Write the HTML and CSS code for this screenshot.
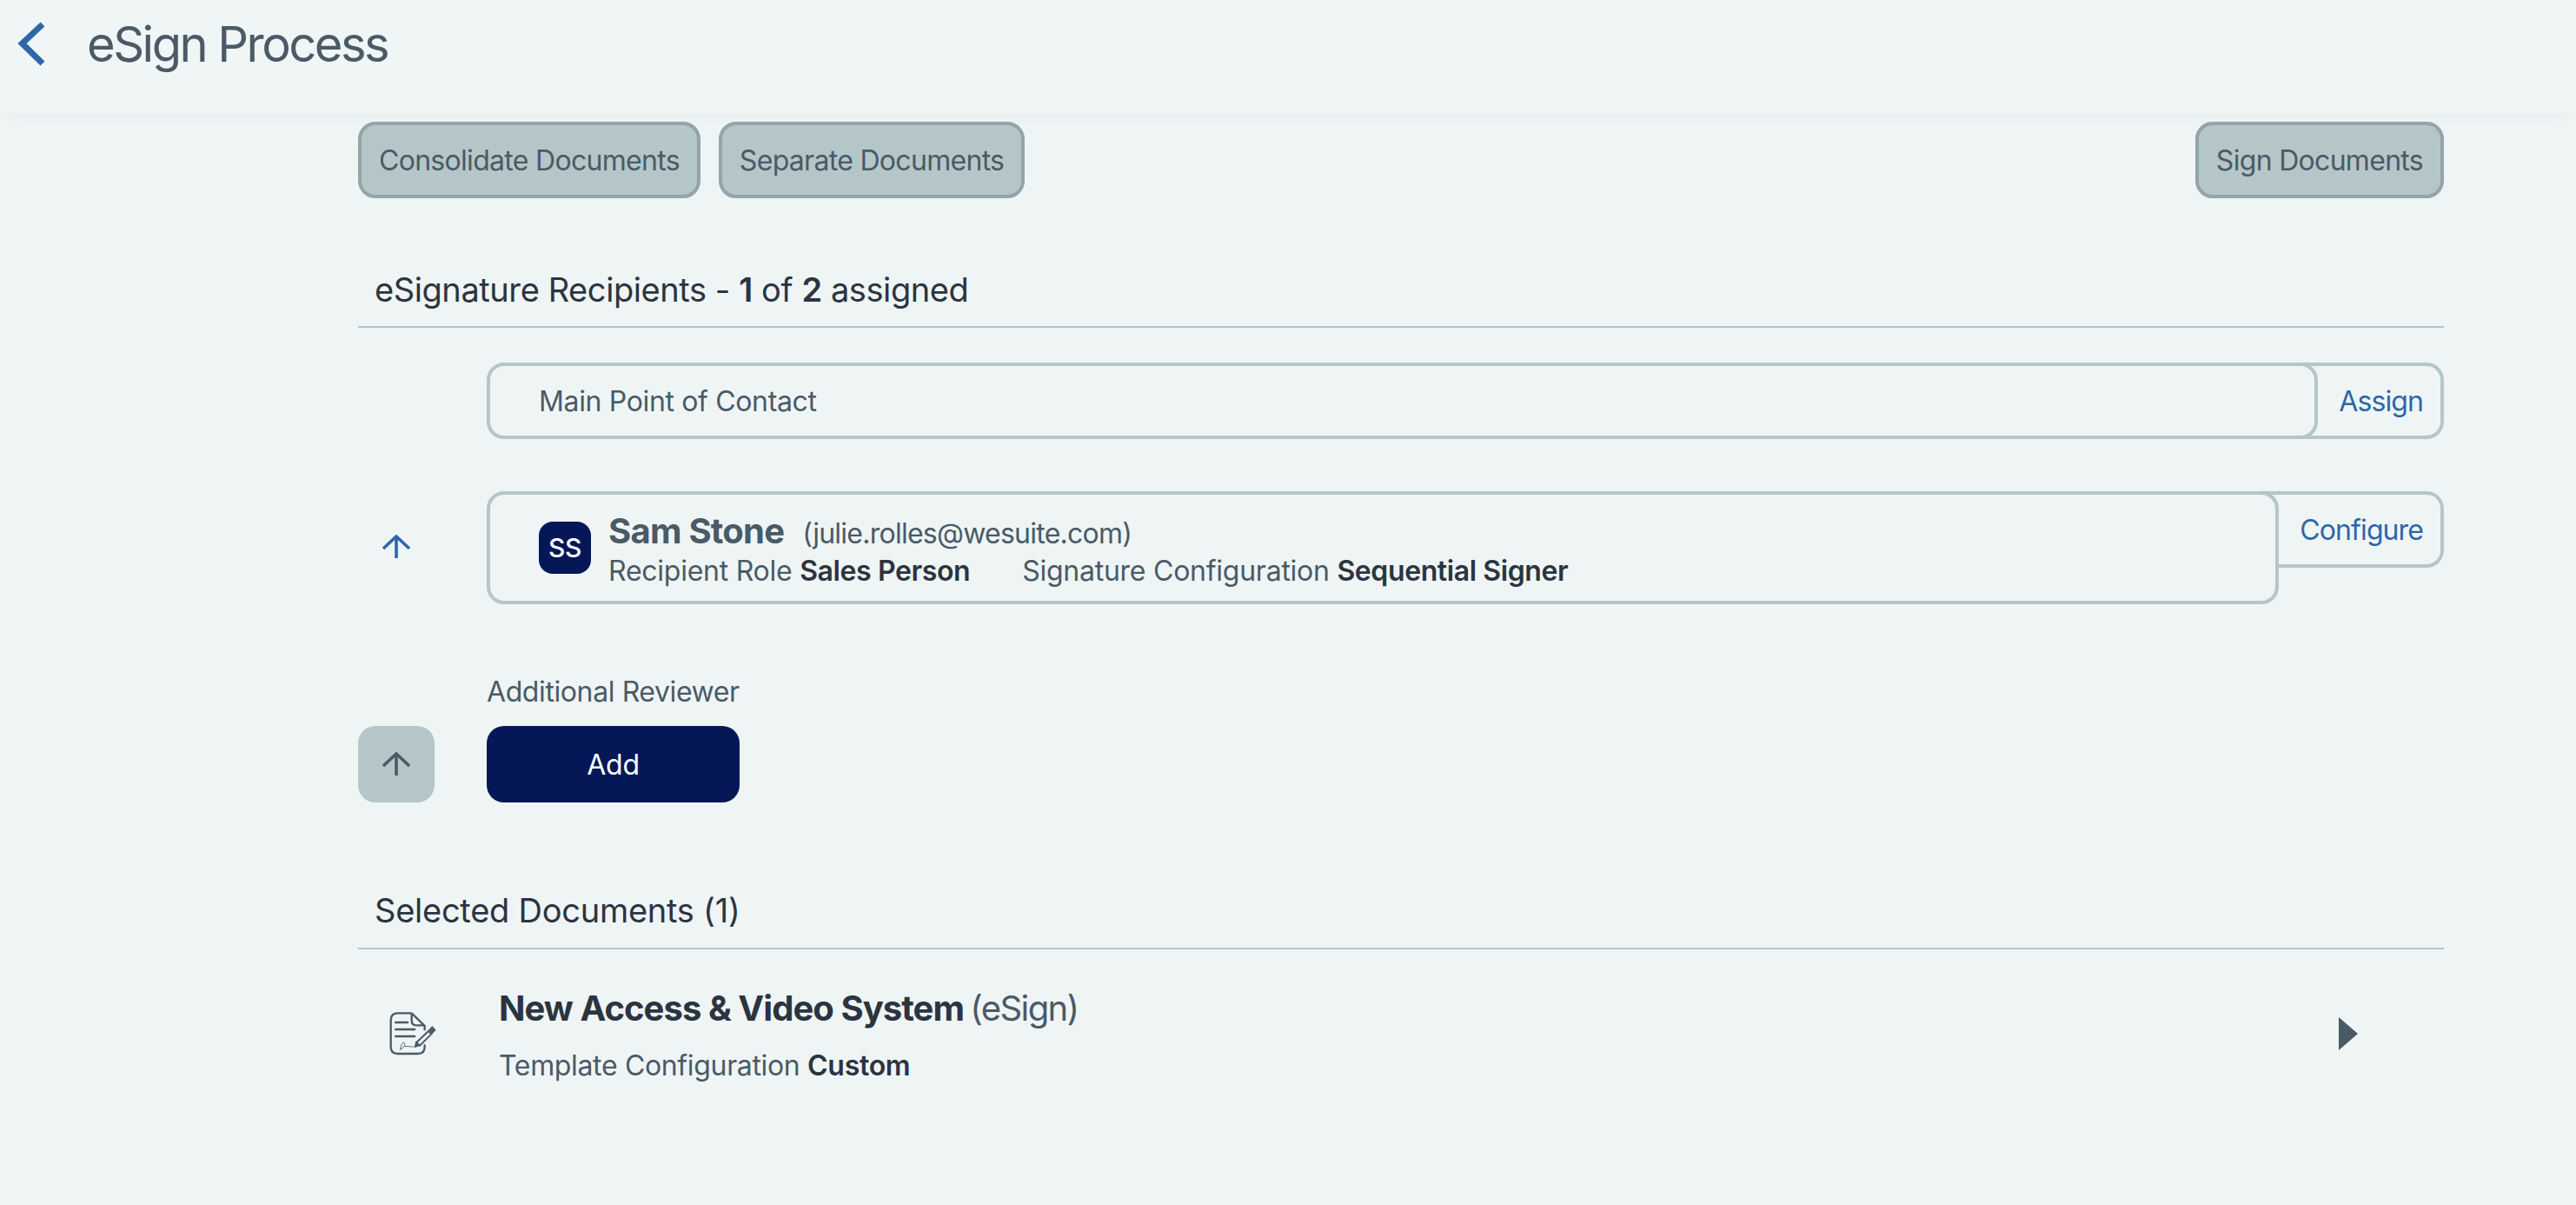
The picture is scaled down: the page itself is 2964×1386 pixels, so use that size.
FILE: index.html
```html
<!DOCTYPE html>
<html lang="en">
<head>
<meta charset="utf-8">
<title>eSign Process</title>
<link rel="stylesheet" href="styles.css">
</head>
<body>
<header class="topbar">
  <svg class="back" viewBox="0 0 60 100" width="60" height="100"><path d="M49 28 L25.5 50 L49 73" fill="none" stroke="#2f66a8" stroke-width="7"/></svg>
  <h1 class="title">eSign Process</h1>
</header>
<main class="content">
  <div class="actions">
    <button class="btn">Consolidate Documents</button>
    <button class="btn">Separate Documents</button>
    <button class="btn btn-end">Sign Documents</button>
  </div>
  <h2 class="section-head">eSignature Recipients - <b>1</b> of <b>2</b> assigned</h2>
  <div class="rows">
    <div class="row row-first">
      <div class="lead"></div>
      <div class="slot">
        <div class="slot-main slot-plain">Main Point of Contact</div>
        <a class="slot-action">Assign</a>
      </div>
    </div>
    <div class="row row-person">
      <div class="lead lead-arrow">
        <svg class="arrow" viewBox="0 0 34 28" width="34" height="28"><path d="M17 27 V3 M2 16 L17 2 L32 16" fill="none" stroke="#2f66a8" stroke-width="3.6"/></svg>
      </div>
      <div class="slot">
        <div class="slot-main slot-person">
          <div class="avatar">SS</div>
          <div class="person">
            <div class="person-top"><span class="name">Sam Stone</span><span class="email">(julie.rolles@wesuite.com)</span></div>
            <div class="person-meta"><span>Recipient Role <b>Sales Person</b></span><span>Signature Configuration <b>Sequential Signer</b></span></div>
          </div>
        </div>
        <a class="slot-action">Configure</a>
      </div>
    </div>
    <div class="row row-add">
      <button class="square">
        <svg class="arrow" viewBox="0 0 34 28" width="34" height="28"><path d="M17 27 V3 M2 16 L17 2 L32 16" fill="none" stroke="#4a5a66" stroke-width="3.6"/></svg>
      </button>
      <div class="reviewer">
        <div class="reviewer-label">Additional Reviewer</div>
        <button class="add">Add</button>
      </div>
    </div>
  </div>
  <h2 class="section-head section-docs">Selected Documents (1)</h2>
  <div class="doc">
    <svg class="doc-icon" viewBox="85 72 165 150" width="55" height="50">
      <g fill="none" stroke="#4a5a66" stroke-width="7">
        <path d="M162 76 H114 Q90 76 90 100 V192 Q90 216 114 216 H183 Q207 216 207 192 V184"/>
        <path d="M162 76 L207 120 V136 M162 76 V102 Q162 118 178 118 H207"/>
        <path d="M107 108 H148 M107 132 H172 M107 156 H172" stroke-linecap="round" stroke-width="8"/>
        <path d="M178 178 L220 138 L230 148 L190 188 Z" stroke-width="6"/>
      </g>
      <path d="M170 196 L177 172 L194 188 Z" fill="#4a5a66"/>
      <path d="M233 120 L246 134 L233 148 L220 134 Z" fill="#4a5a66"/>
      <path d="M123 204 Q122 186 132 178 Q142 176 136 190 Q130 200 122 200 M136 190 L168 192" fill="none" stroke="#4a5a66" stroke-width="2.6"/>
    </svg>
    <div class="doc-body">
      <div class="doc-title"><b>New Access &amp; Video System</b> <span class="doc-kind">(eSign)</span></div>
      <div class="doc-meta">Template Configuration <b>Custom</b></div>
    </div>
    <svg class="caret" viewBox="0 0 24 40" width="24" height="40"><path d="M1 1 L23 20 L1 39 Z" fill="#4a5a66"/></svg>
  </div>
</main>
</body>
</html>
```
FILE: styles.css
```css
* { box-sizing: border-box; }
html, body { margin: 0; height: 100%; }
body {
  background: #eff5f5;
  font-family: Inter, "Liberation Sans", sans-serif;
  color: #4a5a66;
  overflow: hidden;
}
b { font-weight: 600; color: #2b3440; letter-spacing: -.4px; }
.topbar {
  height: 130px;
  display: flex;
  align-items: flex-start;
  background: #f0f5f6;
  box-shadow: 0 8px 16px -8px rgba(60, 80, 90, .08);
}
.back { flex: none; }
.title {
  margin: 23px 0 0 40px;
  font-size: 56px;
  font-weight: 400;
  letter-spacing: -2.5px;
  line-height: 1;
}
.content { width: 2400px; margin-left: 412px; }
.actions { display: flex; gap: 21px; margin-top: 10px; }
.btn {
  height: 88px;
  padding: 0 20px;
  background: #b5c6c9;
  border: 4px solid #93a5aa;
  border-radius: 20px;
  color: #4a5a66;
  font: 400 32px Inter, sans-serif;
  letter-spacing: -.7px;
}
.btn-end { margin-left: auto; }
.section-head {
  margin: 0;
  height: 149px;
  padding: 0 0 19px 19px;
  display: flex;
  align-items: flex-end;
  white-space: pre;
  font-size: 38px;
  font-weight: 400;
  letter-spacing: -.42px;
  color: #2b3440;
  line-height: 46px;
  border-bottom: 2px solid #b5c6c9;
}
.section-head b { letter-spacing: inherit; }
.rows { display: flex; flex-direction: column; }
.row { display: grid; grid-template-columns: 88px 1fr; column-gap: 60px; }
.row-first { margin-top: 40px; }
.row-person { margin-top: 60px; }
.row-add { margin-top: 81px; align-items: end; }
.lead-arrow { display: flex; justify-content: center; padding-top: 50px; }
.arrow { display: block; }
.slot { display: flex; align-items: flex-start; }
.slot-main {
  flex: 1;
  position: relative;
  z-index: 1;
  background: #eff5f5;
  border: 4px solid #b5c6c9;
  border-radius: 20px;
  font-size: 32px;
  letter-spacing: -.35px;
}
.slot-plain { height: 88px; display: flex; align-items: center; padding-left: 56px; }
.slot-person { height: 130px; display: flex; align-items: center; padding-left: 56px; gap: 20px; }
.slot-action {
  height: 88px;
  margin-left: -20px;
  padding: 0 20px 0 44px;
  display: flex;
  align-items: center;
  border: 4px solid #b5c6c9;
  border-left: 0;
  border-radius: 0 20px 20px 0;
  color: #2f66a8;
  font-size: 32px;
  letter-spacing: -.9px;
}
.avatar {
  width: 60px;
  height: 60px;
  flex: none;
  display: flex;
  align-items: center;
  justify-content: center;
  background: #051756;
  border-radius: 16px;
  color: #fff;
  font-size: 30px;
  font-weight: 500;
}
.person { display: flex; flex-direction: column; margin-top: 4px; }
.person-top { display: flex; align-items: baseline; gap: 21px; line-height: 46px; }
.name { font-size: 40px; font-weight: 700; color: #4a5a66; letter-spacing: -.75px; }
.email { font-size: 32px; letter-spacing: -.75px; }
.person-meta { display: flex; gap: 60px; line-height: 40px; font-size: 32px; letter-spacing: -.25px; }
.reviewer { display: flex; flex-direction: column; gap: 19px; }
.reviewer-label { font-size: 32px; line-height: 40px; letter-spacing: -.4px; }
.square {
  width: 88px;
  height: 88px;
  padding: 0;
  display: flex;
  align-items: center;
  justify-content: center;
  background: #b5c6c9;
  border: 0;
  border-radius: 20px;
}
.add {
  width: 291px;
  height: 88px;
  background: #051756;
  border: 0;
  border-radius: 20px;
  color: #fff;
  font: 400 32px Inter, sans-serif;
  letter-spacing: -.3px;
}
.section-docs { height: 169px; padding-bottom: 20px; letter-spacing: -.25px; }
.doc { display: flex; align-items: center; margin-top: 40px; padding-left: 36px; padding-right: 98px; }
.doc-icon { flex: none; }
.doc-body { flex: 1; margin-left: 71px; }
.doc-title { font-size: 40px; line-height: 56px; }
.doc-title b { font-weight: 700; letter-spacing: -.95px; }
.doc-kind { letter-spacing: -1.6px; margin-left: -4px; }
.doc-meta { font-size: 32px; line-height: 40px; margin-top: 18px; letter-spacing: -.34px; }
.doc-meta b { letter-spacing: -.3px; }
.caret { flex: none; }
```
